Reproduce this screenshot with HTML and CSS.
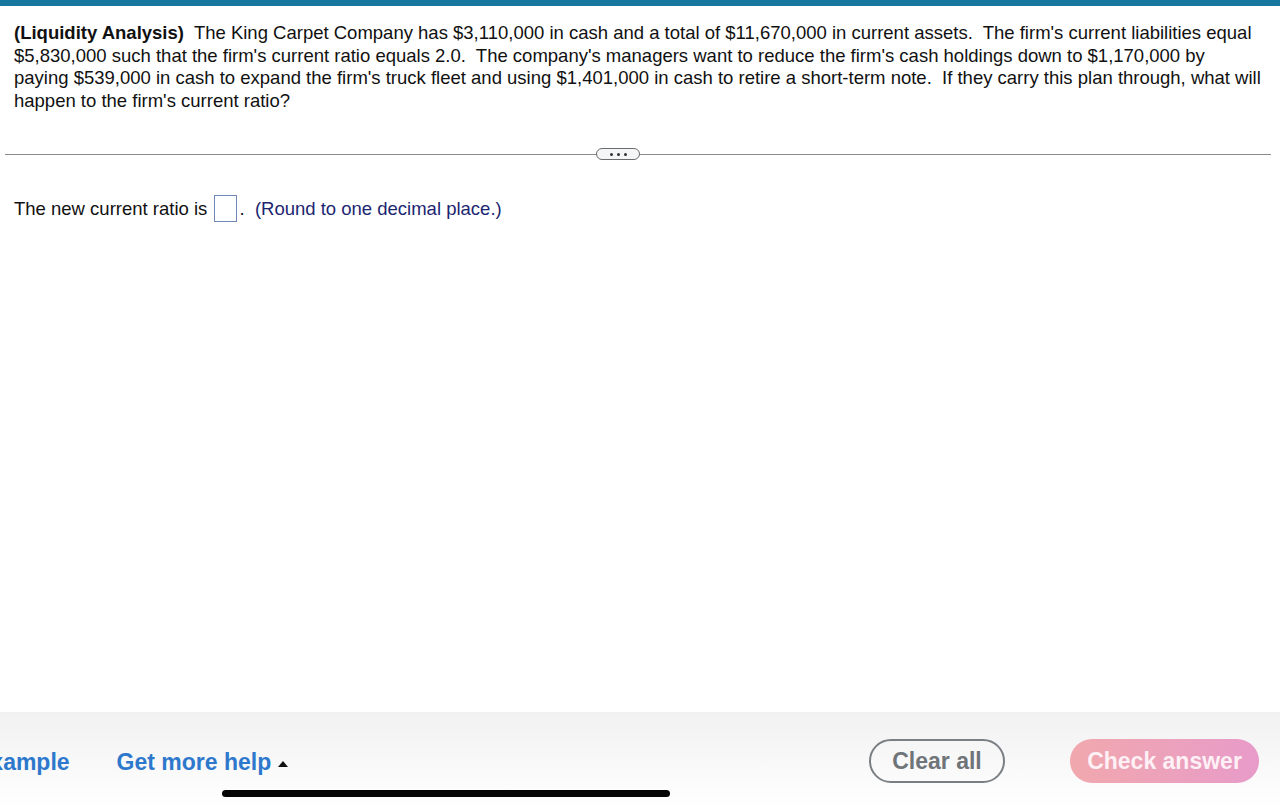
FILE: index.html
```html
<!DOCTYPE html>
<html>
<head>
<meta charset="utf-8">
<link rel="stylesheet" href="styles.css">
</head>
<body>
<div class="topbar"></div>
<div class="page">
  <p class="question"><b>(Liquidity Analysis)</b>&nbsp; The King Carpet Company has $3,110,000 in cash and a total of $11,670,000 in current assets.&nbsp; The firm's current liabilities equal<br>$5,830,000 such that the firm's current ratio equals 2.0.&nbsp; The company's managers want to reduce the firm's cash holdings down to $1,170,000 by<br>paying $539,000 in cash to expand the firm's truck fleet and using $1,401,000 in cash to retire a short-term note.&nbsp; If they carry this plan through, what will<br>happen to the firm's current ratio?</p>
  <div class="divider">
    <span class="pill"><i></i><i></i><i></i></span>
  </div>
  <p class="answer">The new current ratio is <span class="box"></span>.&nbsp; <span class="hint">(Round to one decimal place.)</span></p>
</div>
<div class="footer">
  <div class="links">
    <span class="link example">Example</span>
    <span class="link help">Get more help <span class="caret"></span></span>
  </div>
  <div class="buttons">
    <span class="btn clear">Clear all</span>
    <span class="btn check">Check answer</span>
  </div>
  <div class="home"></div>
</div>
</body>
</html>
```
FILE: styles.css
```css
html, body { margin: 0; padding: 0; }
body {
  width: 1280px;
  height: 809px;
  overflow: hidden;
  font-family: "Liberation Sans", Arial, sans-serif;
  color: #111;
  background: #fff;
  display: flex;
  flex-direction: column;
}
.topbar {
  height: 6px;
  background: #17779e;
  flex: none;
}
.page {
  flex: 1;
  padding: 0 5px 0 5px;
}
.question {
  margin: 0;
  padding: 16px 0 0 9px;
  font-size: 18.5px;
  line-height: 22.7px;
  white-space: nowrap;
}
.divider {
  margin-top: 41px;
  height: 1px;
  background: #8a8a8a;
  display: flex;
  justify-content: flex-start;
  align-items: center;
  width: 1266px;
}
.pill {
  width: 42px;
  height: 10px;
  border: 1.5px solid #6c6c6c;
  border-radius: 7px;
  background: #f4f6f8;
  display: flex;
  justify-content: center;
  align-items: center;
  gap: 4px;
  margin-left: 591px;
}
.pill i {
  width: 3px;
  height: 3px;
  border-radius: 50%;
  background: #333;
}
.answer {
  margin: 40px 0 0 9px;
  font-size: 18.5px;
  line-height: 28px;
  display: flex;
  align-items: center;
  white-space: pre;
}
.box {
  display: inline-block;
  width: 21px;
  height: 25px;
  border: 1.5px solid #6f86b8;
  margin-left: 2px;
  margin-right: 2px;
}
.hint { color: #1c2570; }
.footer {
  flex: none;
  height: 97px;
  background: linear-gradient(#f1f1f1, #fbfbfb 70%, #fff);
  position: relative;
  display: flex;
  justify-content: space-between;
  align-items: flex-start;
}
.links {
  display: flex;
  gap: 47px;
  margin-left: -25px;
  margin-top: 37px;
}
.link {
  color: #2d78cc;
  font-weight: bold;
  font-size: 23px;
  display: flex;
  align-items: center;
}
.caret {
  width: 0; height: 0;
  border-left: 5px solid transparent;
  border-right: 5px solid transparent;
  border-bottom: 6px solid #111;
  margin-left: 7px;
  margin-top: 3px;
}
.buttons {
  display: flex;
  gap: 65px;
  margin-top: 27px;
  margin-right: 21px;
}
.btn {
  height: 44px;
  border-radius: 23px;
  display: flex;
  align-items: center;
  justify-content: center;
  font-weight: bold;
  font-size: 23px;
  box-sizing: border-box;
}
.clear {
  width: 136px;
  border: 2.5px solid #7a7f84;
  color: #6f7479;
}
.check {
  width: 189px;
  background: linear-gradient(90deg, #f1a8ad, #e89bc9);
  color: #fdf1f5;
}
.home {
  position: absolute;
  left: 222px;
  top: 78px;
  width: 448px;
  height: 7px;
  border-radius: 4px;
  background: #050505;
}
```
